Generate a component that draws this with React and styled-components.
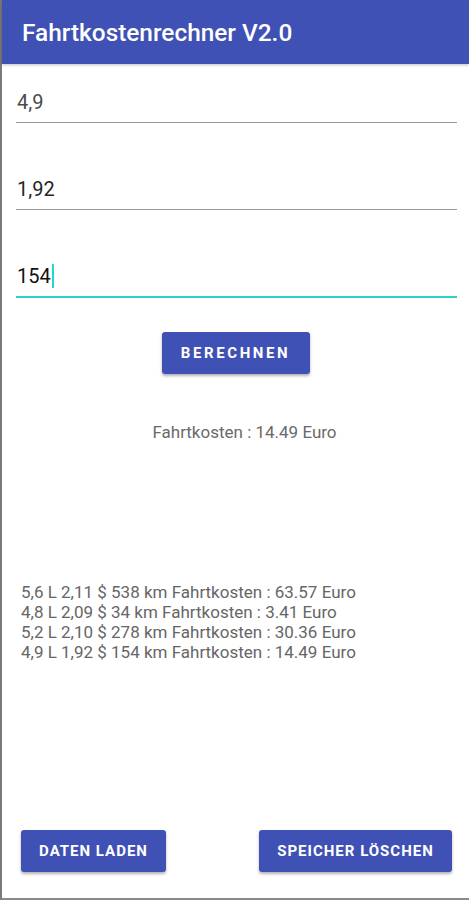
import React from "react";
import styled, { createGlobalStyle } from "styled-components";

const Global = createGlobalStyle`
    html, body {
        margin: 0;
        padding: 0;
        background: #fff;
    }
    body {
        font-family: Roboto, "Noto Sans", sans-serif;
    }
`;

const entries = [
    "5,6 L 2,11 $ 538 km Fahrtkosten : 63.57 Euro",
    "4,8 L 2,09 $ 34 km Fahrtkosten : 3.41 Euro",
    "5,2 L 2,10 $ 278 km Fahrtkosten : 30.36 Euro",
    "4,9 L 1,92 $ 154 km Fahrtkosten : 14.49 Euro",
];

const App = () => {
    return (
        <>
            <Global />
            <Screen>
                <Toolbar>
                    <Title>Fahrtkostenrechner V2.0</Title>
                </Toolbar>
                <Form>
                    <Field tone="#4a4a4a">4,9</Field>
                    <Field tone="#262626">1,92</Field>
                    <Field tone="#111" focused>
                        154<Caret />
                    </Field>
                </Form>
                <Center>
                    <Button width={148} spacing={2.6}>Berechnen</Button>
                </Center>
                <Result>Fahrtkosten : 14.49 Euro</Result>
                <History>
                    {entries.map((e) => (
                        <div key={e}>{e}</div>
                    ))}
                </History>
                <BottomRow>
                    <Button width={145}>Daten laden</Button>
                    <Button width={193}>Speicher löschen</Button>
                </BottomRow>
            </Screen>
        </>
    );
};

export default App;

const Screen = styled.div`
    width: 469px;
    height: 900px;
    box-sizing: border-box;
    border-left: 2px solid #7a7a7a;
    border-bottom: 2px solid #8a8a8a;
    display: flex;
    flex-direction: column;
    background: #fff;
`;

const Toolbar = styled.div`
    height: 64px;
    background: #3f51b5;
    display: flex;
    align-items: center;
    padding-left: 20px;
    box-shadow: 0 1px 3px rgba(0, 0, 0, 0.25);
`;

const Title = styled.div`
    color: #fff;
    font-size: 24.4px;
    font-weight: 500;
`;

const Form = styled.div`
    padding: 18px 12px 0 14px;
    display: flex;
    flex-direction: column;
    gap: 46px;
`;

const Field = styled.div`
    height: 40px;
    line-height: 40px;
    font-size: 20px;
    color: ${(p) => p.tone};
    border-bottom: ${(p) => (p.focused ? "2px solid #2ad4c8" : "1.5px solid #9a9a9a")};
    padding-left: 1px;
    display: flex;
    align-items: center;
`;

const Caret = styled.span`
    display: inline-block;
    width: 2px;
    height: 24px;
    margin-left: 1px;
    background: #2ad4c8;
`;

const Center = styled.div`
    display: flex;
    justify-content: center;
    margin-top: 34px;
`;

const Button = styled.button`
    width: ${(p) => p.width}px;
    height: 42px;
    border: none;
    border-radius: 3px;
    background: #3f51b5;
    color: #fff;
    font-family: Roboto, "Noto Sans", sans-serif;
    font-size: 15px;
    font-weight: 700;
    letter-spacing: ${(p) => p.spacing ?? 1}px;
    text-transform: uppercase;
    box-shadow: 0 2px 3px rgba(0, 0, 0, 0.3);
    padding: 0;
`;

const Result = styled.div`
    margin-top: 48px;
    text-align: center;
    font-size: 17px;
    line-height: 20px;
    color: #6a6a6a;
    padding-left: 18px;
`;

const History = styled.div`
    margin-top: 140px;
    padding-left: 19px;
    font-size: 17px;
    line-height: 20px;
    color: #666;
`;

const BottomRow = styled.div`
    margin-top: auto;
    display: flex;
    justify-content: space-between;
    padding: 0 17px 26px 19px;
`;
